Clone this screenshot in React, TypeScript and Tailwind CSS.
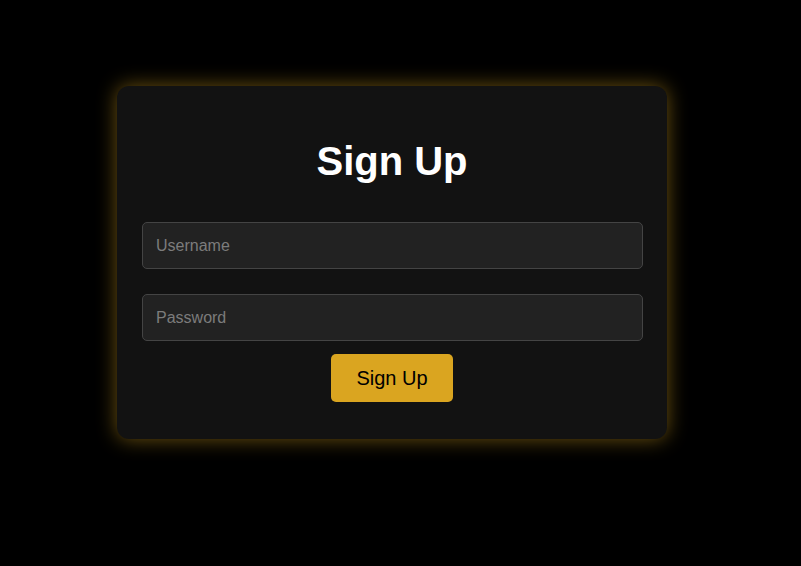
export default function App() {
  return (
    <div className="min-h-[566px] w-full bg-black pl-[117px] pt-[86px] font-['Liberation_Sans',Arial,sans-serif]">
      <div className="flex w-[550px] flex-col items-center rounded-xl bg-[#121212] p-[25px] shadow-[0_0_20px_rgba(218,165,32,0.5)]">
        <h1 className="my-[27px] text-[40px] font-bold leading-[46px] text-white">Sign Up</h1>
        <input
          type="text"
          placeholder="Username"
          className="mt-[11px] h-[47px] w-[501px] self-start rounded-[5px] border border-[#444] bg-[#222] px-[13px] text-base text-white outline-none placeholder:text-[#7c7c7c]"
        />
        <input
          type="password"
          placeholder="Password"
          className="mt-[25px] h-[47px] w-[501px] self-start rounded-[5px] border border-[#444] bg-[#222] px-[13px] text-base text-white outline-none placeholder:text-[#7c7c7c]"
        />
        <button className="mb-[12px] mt-[13px] h-[48px] rounded-[5px] bg-[#daa520] px-[25px] text-xl text-black">
          Sign Up
        </button>
      </div>
    </div>
  );
}
